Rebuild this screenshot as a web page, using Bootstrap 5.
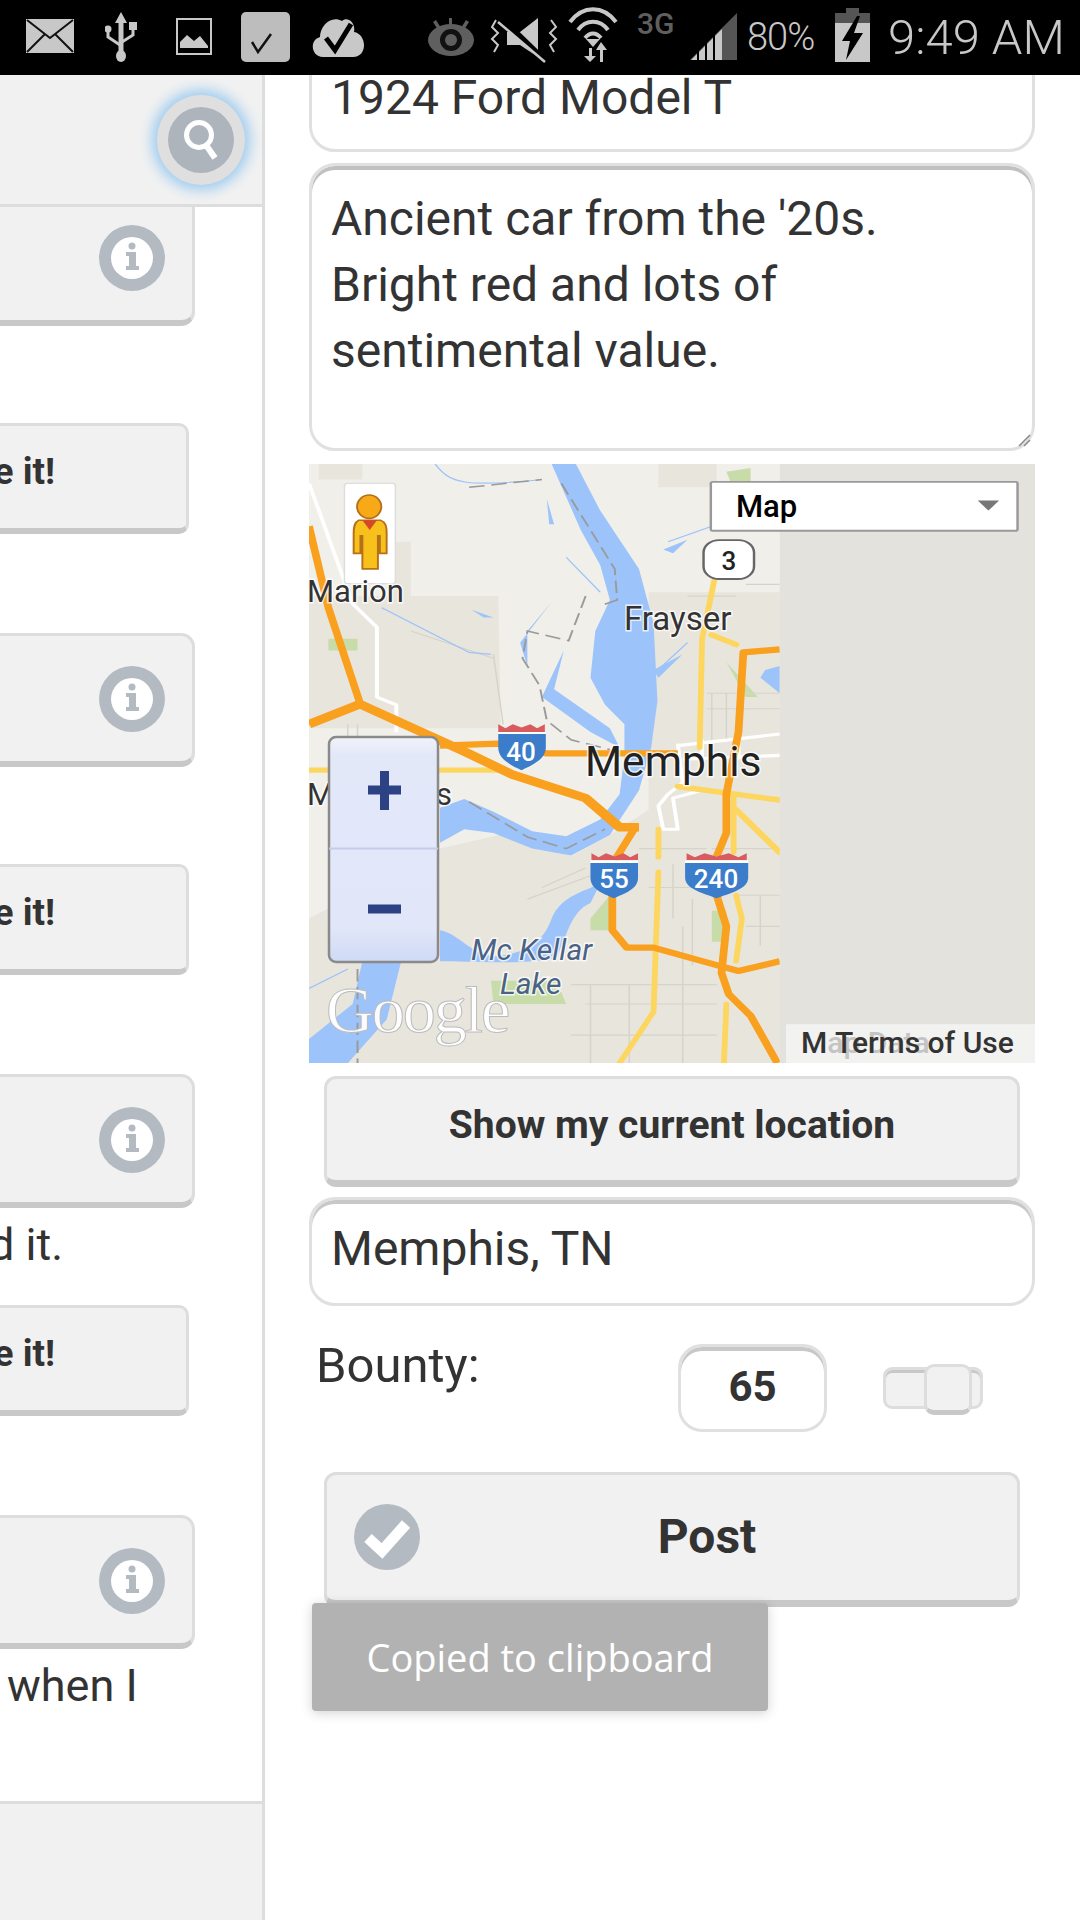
<!DOCTYPE html>
<html lang="en">
<head>
<meta charset="utf-8">
<title>Post a bounty</title>
<link href="https://cdn.jsdelivr.net/npm/bootstrap@5.3.0/dist/css/bootstrap.min.css" rel="stylesheet">
<style>
html,body{margin:0;width:1080px;height:1920px;overflow:hidden;background:#fff;font-family:Roboto,"Liberation Sans",sans-serif;color:#333}
.status-bar{height:75px;background:#000;position:relative;z-index:3}
.status-bar svg{display:block;flex:none}
.s1{margin-left:26px}.s2{margin-left:31px}.s3{margin-left:38px}.s4{margin-left:29px}.s5{margin-left:21px}.s6{margin-left:62px}.s7{margin-left:15px}.s8{margin-left:10px}.s9{margin-left:19px}.s10{margin-left:15px}
.pct{margin-left:10px;font-size:38px;line-height:75px;color:#c8c8c8;font-weight:300;width:71px;letter-spacing:-1px;white-space:nowrap}
.batt{margin-left:17px}
.clock{margin-left:18px;font-size:49px;line-height:71px;color:#c8c8c8;font-weight:300;white-space:nowrap}
.screen{height:1845px}
.side{width:265px;flex:none;border-right:3px solid #ddd;overflow:hidden}
.side-head{height:132px;flex:none;background:#f1f1f1;border-bottom:3px solid #ddd;padding-right:17px;position:relative;z-index:2}
.find-btn{width:88px;height:90px;border-radius:50%;background:#dfdfdf;box-shadow:0 0 13px 5px #9ccbf0;padding:0;border:0}
.side-list{overflow:hidden}
.side-foot{height:119px;flex:none;background:#f1f1f1;border-top:3px solid #ddd}
.info-card{width:205px;height:134px;margin-left:-10px;flex:none;background:#f1f1f1;border:3px solid #ddd;border-bottom:6px solid #c8c8c8;border-radius:0 0 14px 0;border-top-right-radius:14px;padding-right:27px}
.first-card{margin-top:-15px}
.side-btn{width:199px;height:111px;margin-left:-10px;flex:none;display:flex;align-items:center;justify-content:flex-end;background:#f1f1f1;border:3px solid #ddd;border-bottom:6px solid #c8c8c8;border-radius:0 10px 10px 0;font-size:37px;font-weight:700;color:#333;padding:0 131px 10px 0;margin-bottom:99px;white-space:nowrap}
.side-note{height:97px;font-size:45px;line-height:74px;white-space:nowrap}
.note-found{margin-left:-11px}
.note-when{padding-left:7px}
.form-col{width:726px;margin-left:44px;position:relative}
.field{display:block;border:3px solid #e0e0e0;border-radius:26px;padding:0 19px;font-size:48px;color:#333;background:#fff;line-height:66px;font-weight:400;box-shadow:none}
.field-name{height:107px;margin-top:-30px;padding-top:17px;margin-bottom:11px}
.field-desc{height:288px;padding-top:20px;box-shadow:inset 0 4px 0 #c0c0c0;margin-bottom:13px;position:relative}
.grip{position:absolute;right:1px;bottom:1px}
.map-box{height:599px;margin-bottom:13px;position:relative;overflow:hidden}
.map-box svg{display:block}
.wide-btn{display:block;width:696px;margin-left:15px;background:#f1f1f1;border:3px solid #ddd;border-bottom:7px solid #c8c8c8;border-radius:12px;font-weight:700;color:#333}
.loc-btn{height:111px;font-size:39px;padding:0 0 8px;margin-bottom:10px}
.field-loc{height:109px;padding-top:16px;box-shadow:inset 0 4px 0 #c8c8c8;margin-bottom:38px}
.bounty-row{height:88px;margin-bottom:40px}
.bounty-label{font-size:49px;line-height:50px;margin-left:7px;width:362px;margin-top:-3px;align-self:flex-start}
.bounty-val{width:149px;height:88px;border:3px solid #e0e0e0;border-radius:24px;box-shadow:inset 0 4px 0 #c8c8c8;font-size:42px;font-weight:700;text-align:center;line-height:80px}
.slide-track{width:100px;height:42px;margin-left:56px;background:#f1f1f1;border:3px solid #ddd;border-radius:9px;position:relative;box-shadow:inset 0 3px 0 #c8c8c8}
.slide-thumb{position:absolute;left:38px;top:-6px;width:48px;height:51px;background:#f1f1f1;border:3px solid #ddd;border-bottom:5px solid #c8c8c8;border-radius:10px}
.post-btn{height:135px;font-size:48px;position:relative;padding:0 0 2px 70px}
.post-mark{position:absolute;left:27px;top:29px}
.copied{position:absolute;left:3px;top:1528px;width:456px;height:108px;background:#b2b2b2;color:#fff;font-family:"Open Sans",Roboto,sans-serif;font-size:38px;font-weight:400;border-radius:4px;box-shadow:0 2px 12px rgba(0,0,0,.18);z-index:4}
.map-t{font-family:Roboto,"Liberation Sans",sans-serif;paint-order:stroke;stroke:#fff;stroke-opacity:.75;stroke-width:3px}
</style>
</head>
<body>
<div class="status-bar d-flex align-items-center">
  <svg class="s1" width="48" height="75" viewBox="0 0 48 75"><rect y="19" width="48" height="34" fill="#c8c8c8"/><path d="M1 20 L24 38 L47 20 M1 52 L19 34 M47 52 L29 34" fill="none" stroke="#111" stroke-width="2"/></svg>
  <svg class="s2" width="33" height="75" viewBox="0 0 33 75"><g fill="#c8c8c8"><path d="M16 12 L22 23 H18.5 V51 H13.5 V23 H10Z"/><ellipse cx="16" cy="56" rx="5" ry="6"/><rect x="24" y="22" width="8" height="8"/><circle cx="3" cy="29" r="3.5"/></g><path d="M3 30 V37 L15 45 M28 30 V35 L17 42" fill="none" stroke="#c8c8c8" stroke-width="3"/></svg>
  <svg class="s3" width="36" height="75" viewBox="0 0 36 75"><rect x="1" y="19" width="34" height="35" fill="none" stroke="#c8c8c8" stroke-width="2"/><path d="M4 48 V42 L11 35 L18 41 L24 36 L32 46 V48Z" fill="#c8c8c8"/></svg>
  <svg class="s4" width="49" height="75" viewBox="0 0 49 75"><rect y="12" width="49" height="50" rx="5" fill="#bdbdbd"/><path d="M11 42 L17 52 L30 34" fill="none" stroke="#111" stroke-width="2.500"/></svg>
  <svg class="s5" width="54" height="75" viewBox="0 0 54 75"><path d="M12 57 C0 57 -2 40 9 37 C9 26 20 15 31 21 C36 16 45 22 43 32 C56 34 57 57 42 57Z" fill="#c8c8c8"/><path d="M15 38 L24 50 L40 24" fill="none" stroke="#000" stroke-width="5"/></svg>
  <svg class="s6" width="48" height="75" viewBox="0 0 48 75"><g fill="#5f5f5f"><ellipse cx="24" cy="40" rx="23" ry="16"/><rect x="22" y="18" width="3" height="9"/><path d="M6 22 L9 20 L14 28 L11 30Z M42 22 L39 20 L34 28 L37 30Z"/></g><circle cx="24" cy="40" r="11" fill="#111"/><circle cx="24" cy="40" r="6" fill="#5f5f5f"/></svg>
  <svg class="s7" width="68" height="75" viewBox="0 0 68 75"><path d="M17 32 H30 L48 18 V57 L30 45 H17Z" fill="#c8c8c8"/><path d="M12 19 L52 58" stroke="#000" stroke-width="6"/><path d="M8 22 L55 62" stroke="#c8c8c8" stroke-width="2.500"/><path d="M6 20 L2 27 L8 33 L2 39 L8 45 L4 52 M61 20 L66 27 L60 33 L66 39 L60 45 L64 52" fill="none" stroke="#c8c8c8" stroke-width="2"/></svg>
  <svg class="s8" width="50" height="75" viewBox="0 0 50 75"><g fill="none" stroke="#c8c8c8" stroke-width="4"><path d="M2 22 C15 5 35 5 48 22"/><path d="M10 30 C18 19 32 19 40 30"/><path d="M17 38 C22 32 28 32 33 38"/></g><path d="M25 47 L18 39 H32Z" fill="#c8c8c8"/><path d="M21 48 V56 H16 L22 62 L28 56 H24 V48Z M35 62 V50 H39 L33 42 L28 50 H32 V62Z" fill="#c8c8c8"/></svg>
  <svg class="s9" width="38" height="75" viewBox="0 0 38 75"><text x="0" y="34" font-family="Roboto,sans-serif" font-size="30" font-weight="500" fill="#5f5f5f">3G</text></svg>
  <svg class="s10" width="47" height="75" viewBox="0 0 47 75"><path d="M0 60 L47 13 V60Z" fill="#555"/><path d="M1 60 L32 29 V60Z" fill="#c8c8c8"/><path d="M8 42 V60 M16 34 V60 M24 26 V60" stroke="#000" stroke-width="2"/></svg>
  <span class="pct">80%</span>
  <svg class="batt" width="35" height="75" viewBox="0 0 35 75"><rect x="11" y="8" width="13" height="7" fill="#555"/><rect y="13" width="35" height="49" fill="#555"/><rect y="23" width="35" height="39" fill="#c8c8c8"/><path d="M22 16 L7 41 H15 L11 60 L28 33 H19 L25 16Z" fill="#000"/></svg>
  <span class="clock">9:49 AM</span>
</div>

<div class="screen d-flex">
  <aside class="side d-flex flex-column">
    <div class="side-head d-flex justify-content-end align-items-center">
      <button class="btn find-btn d-flex justify-content-center align-items-center" type="button" aria-label="Search">
        <svg width="66" height="66" viewBox="0 0 66 66"><circle cx="33" cy="33" r="33" fill="#aeb4bb"/><circle cx="31" cy="28" r="12.500" fill="none" stroke="#fff" stroke-width="5"/><path d="M38 38 L47 51" stroke="#fff" stroke-width="6"/></svg>
      </button>
    </div>
    <div class="side-list flex-grow-1 d-flex flex-column">
      <div class="info-card first-card d-flex justify-content-end align-items-center"><svg width="66" height="66" viewBox="0 0 66 66"><circle cx="33" cy="33" r="33" fill="#b4bac2"/><circle cx="33" cy="33" r="21" fill="#fff"/><circle cx="33" cy="21" r="3.500" fill="#b4bac2"/><path d="M27 27 H37 V41 H40 V45 H27 V41 H30 V31 H27Z" fill="#b4bac2"/></svg></div>
      <div class="side-note"></div>
      <div class="side-btn">e it!</div>
      <div class="info-card d-flex justify-content-end align-items-center"><svg width="66" height="66" viewBox="0 0 66 66"><circle cx="33" cy="33" r="33" fill="#b4bac2"/><circle cx="33" cy="33" r="21" fill="#fff"/><circle cx="33" cy="21" r="3.500" fill="#b4bac2"/><path d="M27 27 H37 V41 H40 V45 H27 V41 H30 V31 H27Z" fill="#b4bac2"/></svg></div>
      <div class="side-note"></div>
      <div class="side-btn">e it!</div>
      <div class="info-card d-flex justify-content-end align-items-center"><svg width="66" height="66" viewBox="0 0 66 66"><circle cx="33" cy="33" r="33" fill="#b4bac2"/><circle cx="33" cy="33" r="21" fill="#fff"/><circle cx="33" cy="21" r="3.500" fill="#b4bac2"/><path d="M27 27 H37 V41 H40 V45 H27 V41 H30 V31 H27Z" fill="#b4bac2"/></svg></div>
      <div class="side-note note-found">d it.</div>
      <div class="side-btn">e it!</div>
      <div class="info-card d-flex justify-content-end align-items-center"><svg width="66" height="66" viewBox="0 0 66 66"><circle cx="33" cy="33" r="33" fill="#b4bac2"/><circle cx="33" cy="33" r="21" fill="#fff"/><circle cx="33" cy="21" r="3.500" fill="#b4bac2"/><path d="M27 27 H37 V41 H40 V45 H27 V41 H30 V31 H27Z" fill="#b4bac2"/></svg></div>
      <div class="side-note note-when">when I</div>
    </div>
    <div class="side-foot"></div>
  </aside>

  <main class="form-col">
    <div class="field field-name">1924 Ford Model T</div>
    <div class="field field-desc">Ancient car from the '20s.<br>Bright red and lots of<br>sentimental value.
      <svg class="grip" width="14" height="14" viewBox="0 0 14 14"><path d="M2 13 L13 2 M7 13 L13 7" stroke="#888" stroke-width="1.500"/></svg>
    </div>

    <div class="map-box">
      <svg width="726" height="599" viewBox="0 0 726 599">
        <g transform="scale(.4853 .3885) translate(-20 -10)">
          <rect x="20" y="10" width="1496" height="1542" fill="#f0efea"/>
          <g fill="#e8e5dd">
            <path d="M20 350 H410 L415 690 H20Z"/><path d="M190 210 H230 V350 H190Z"/>
            <path d="M20 1180 L290 1000 L430 960 L560 1020 L640 965 L720 900 L720 340 L990 340 V1552 H20Z"/>
            <path d="M40 10 H130 V50 H40Z M740 10 H860 V70 H740Z"/>
          </g>
          <g fill="#c8dcaa">
            <path d="M395 1340 H530 L550 1400 H400Z M880 30 L930 20 V60 H890Z M600 1180 L640 1120 V1210 L600 1210Z M60 460 H120 V490 H60Z M850 1160 H880 V1240 H850Z M880 520 L945 610 L920 610Z"/>
          </g>
          <g fill="none" stroke="#d6d3ca" stroke-width="3">
            <path d="M840 600 H990 M840 640 H990 M850 1000 H990 M900 1120 H990 M920 1200 H990 M560 1350 H860 M590 1400 H860 M560 1480 H860 M600 1350 V1552 M680 1350 V1552 M790 1350 V1552 M850 600 V720 M880 600 V720 M920 320 H990 M800 350 H900 M800 400 H830 M790 1200 V1350 M500 1100 L590 1050 M470 1130 L600 1070 M100 1000 V680 M120 680 V800 M950 1120 V1250 M230 440 L400 510 M400 500 L420 680 M700 1000 H840 M770 1040 V1180 M810 1130 V1300 M720 1100 H860"/>
          </g>
          <g fill="#9cc3fa">
            <path d="M520 10 H570 L620 130 L700 280 L730 420 L738 620 L725 740 L700 850 L640 965 L560 1018 L480 1000 L400 960 L340 950 L290 985 V895 L340 872 L400 905 L480 955 L550 968 L620 925 L660 860 L670 760 L670 680 L630 630 L600 560 L610 440 L640 360 L620 270 L580 180Z"/>
            <path d="M510 100 L525 165 L515 165Z M455 470 L520 365 L470 440 L470 530Z M500 610 L545 490 L525 590 L640 690 L660 740 L600 700Z"/>
            <path d="M290 1210 C330 1220 340 1260 400 1278 C460 1270 500 1250 520 1180 C540 1120 590 1110 620 1090 L600 1140 C560 1160 550 1230 530 1280 C470 1300 350 1290 290 1290Z"/>
            <path d="M130 1290 H210 L180 1440 L100 1552 H20 V1490 L110 1400Z M730 540 L790 500 L740 560Z M960 540 L990 530 V600 L950 560Z M355 385 L400 405 L380 405Z M750 230 L800 205 L770 240Z"/>
          </g>
          <g fill="none" stroke="#9cc3fa" stroke-width="3"><path d="M280 10 C310 60 340 70 500 50 M170 380 L350 495 L395 500 M550 250 L620 340 M760 210 L850 170 M730 550 L800 470 M20 1360 L100 1310"/></g>
          <g fill="none" stroke="#9a9a9a" stroke-width="4" stroke-dasharray="32 14">
            <path d="M350 70 L500 50 M540 60 L600 180 L650 280 L655 360 L620 375 M590 350 L555 465 L470 440 L460 510 L495 580 L510 670 L560 720 L640 745 M350 880 L470 970 L550 1000 L630 950 M120 1310 L120 1552"/>
          </g>
          <g fill="none" stroke="#fff" stroke-width="8" stroke-linejoin="round">
            <path d="M20 60 L110 370 L160 430 L160 610 L200 630 L200 700 M780 735 L990 705 M790 770 L990 760 M790 830 L760 860 L740 890 L750 950 L780 950 L770 870 L830 850 M780 730 L790 830 M830 720 V780 M905 720 V770"/>
          </g>
          <g fill="none" stroke="#fdd660" stroke-linejoin="round" stroke-linecap="round">
            <path stroke-width="14" d="M20 798 H420 M780 840 L990 875 M900 900 L990 1010 M850 450 L900 475"/>
            <path stroke-width="12" d="M855 310 L830 460 L825 740 M740 950 V1022 M740 1060 L730 1420 L660 1552 M880 1400 L875 1552 M900 1120 L912 1180 L900 1290 M895 860 V1010"/>
          </g>
          <g fill="none" stroke="#f9a01f" stroke-linejoin="round" stroke-width="16">
            <path d="M20 170 L60 380 L125 625"/>
            <path stroke-width="22" d="M20 680 L125 628 L340 750 L440 810 L590 870 L660 945 H700"/>
            <path d="M290 735 L410 730 L510 755 H780"/>
            <path d="M990 487 L915 495 L905 700 L880 860 V960 L860 1020 M860 1120 L880 1200 L870 1320 L885 1375 L930 1430 L985 1552"/>
            <path d="M690 950 L650 1030 M645 1120 V1210 L675 1255 H730 L860 1300 L905 1315 L990 1290"/>
          </g>
          <rect x="990" y="10" width="526" height="1542" fill="#e3e2dd"/>
          <g>
            <path d="M410 680 L425 690 L440 680 L458 688 L476 680 L490 690 L506 680 V700 H410Z" fill="#d85b5f"/>
            <rect x="410" y="700" width="98" height="6" fill="#fff"/>
            <path d="M410 705 H508 V740 C508 770 480 785 458 798 C436 785 410 770 410 740Z" fill="#3b7ccb"/>
            <path d="M602 1012 L617 1022 L632 1012 L650 1020 L668 1012 L682 1022 L698 1012 V1030 H602Z" fill="#d85b5f"/>
            <rect x="600" y="1030" width="98" height="7" fill="#fff"/>
            <path d="M600 1037 H698 V1075 C698 1105 670 1115 648 1128 C626 1115 600 1105 600 1075Z" fill="#3b7ccb"/>
            <path d="M798 1012 L815 1022 L835 1012 L860 1020 L885 1012 L905 1022 L922 1012 V1030 H798Z" fill="#d85b5f"/>
            <rect x="795" y="1030" width="130" height="7" fill="#fff"/>
            <path d="M795 1037 H925 V1075 C925 1105 885 1115 860 1128 C835 1115 795 1105 795 1075Z" fill="#3b7ccb"/>
            <rect x="833" y="206" width="104" height="100" rx="32" fill="#fff" stroke="#666" stroke-width="5"/>
          </g>
          <rect x="93" y="60" width="105" height="258" rx="6" fill="#fff" stroke="#ddd" stroke-width="3"/>
          <ellipse cx="144" cy="120" rx="25" ry="30" fill="#f7a917" stroke="#b5701a" stroke-width="4"/>
          <path d="M122 155 H168 C178 160 180 170 180 190 V240 H166 V195 H162 V280 H130 V195 H126 V240 H112 V190 C112 170 114 160 122 155Z" fill="#f7c01a" stroke="#b5701a" stroke-width="4"/>
          <path d="M130 155 H160 L145 180Z" fill="#d4472a"/>
          <rect x="848" y="56" width="632" height="126" rx="4" fill="#fff" stroke="#999" stroke-width="5"/>
          <path d="M1398 104 H1442 L1420 130Z" fill="#777"/>
          <defs><linearGradient id="zoomfill" x1="0" y1="0" x2="0" y2="1"><stop offset="0" stop-color="#f1f3f9"/><stop offset=".08" stop-color="#e3e8f9"/><stop offset=".85" stop-color="#e1e7f9"/><stop offset="1" stop-color="#cfd9f6"/></linearGradient></defs>
          <rect x="1003" y="1452" width="513" height="100" fill="#f2f2f1"/>
        </g>
        <g class="map-t">
          <text x="-2" y="138" font-size="31" fill="#333">Marion</text>
          <text x="315" y="166" font-size="33" fill="#333">Frayser</text>
          <text x="276" y="312" font-size="42.500" fill="#222">Memphis</text>
          <text x="-2" y="341" font-size="31" fill="#333">M</text>
          <text x="127" y="341" font-size="31" fill="#333">s</text>
          <text x="162" y="496" font-size="30" font-style="italic" fill="#4a6285">Mc Kellar</text>
          <text x="191" y="530" font-size="30" font-style="italic" fill="#4a6285">Lake</text>
        </g>
        <g font-family="Roboto,sans-serif">
          <text x="212" y="297" font-size="26" font-weight="500" fill="#fff" text-anchor="middle">40</text>
          <text x="305" y="424" font-size="26" font-weight="500" fill="#fff" text-anchor="middle">55</text>
          <text x="407" y="424" font-size="26" font-weight="500" fill="#fff" text-anchor="middle">240</text>
          <text x="420" y="106" font-size="26" font-weight="500" fill="#222" text-anchor="middle">3</text>
          <text x="427" y="53" font-size="31" font-weight="500" fill="#000">Map</text>
          <text x="17" y="568" font-family="Liberation Serif,serif" font-size="66" fill="#fff" fill-opacity=".95" stroke="#bbb" stroke-width="1" letter-spacing="-2">Google</text>
          <text x="492" y="589" font-size="30" font-weight="500" fill="#333">M<tspan fill="#c4c4c4">ap Data</tspan></text>
          <text x="526" y="589" font-size="30" font-weight="500" fill="#333">Terms of Use</text>
        </g>
        <g>
          <rect x="20" y="273" width="109" height="225" rx="7" fill="url(#zoomfill)" stroke="#8a8a8a" stroke-width="2.500"/>
          <path d="M20 384.500 H129" stroke="#c3cde9" stroke-width="2"/>
          <path d="M59 326 H92 M75.500 307 V346" stroke="#2c4284" stroke-width="9"/>
          <path d="M59 445 H92" stroke="#2c4284" stroke-width="9"/>
        </g>
      </svg>
    </div>

    <button class="btn wide-btn loc-btn" type="button">Show my current location</button>
    <div class="field field-loc">Memphis, TN</div>
    <div class="bounty-row d-flex align-items-center">
      <div class="bounty-label">Bounty:</div>
      <div class="bounty-val">65</div>
      <div class="slide-track"><div class="slide-thumb"></div></div>
    </div>
    <button class="btn wide-btn post-btn" type="button">
      <svg class="post-mark" width="66" height="66" viewBox="0 0 66 66"><circle cx="33" cy="33" r="33" fill="#b4bac2"/><path d="M14 34 L28 47 L52 20" fill="none" stroke="#fff" stroke-width="11"/></svg>
      Post
    </button>
    <div class="copied d-flex justify-content-center align-items-center">Copied to clipboard</div>
  </main>
</div>
<script src="https://cdn.jsdelivr.net/npm/bootstrap@5.3.0/dist/js/bootstrap.bundle.min.js"></script>
</body>
</html>
